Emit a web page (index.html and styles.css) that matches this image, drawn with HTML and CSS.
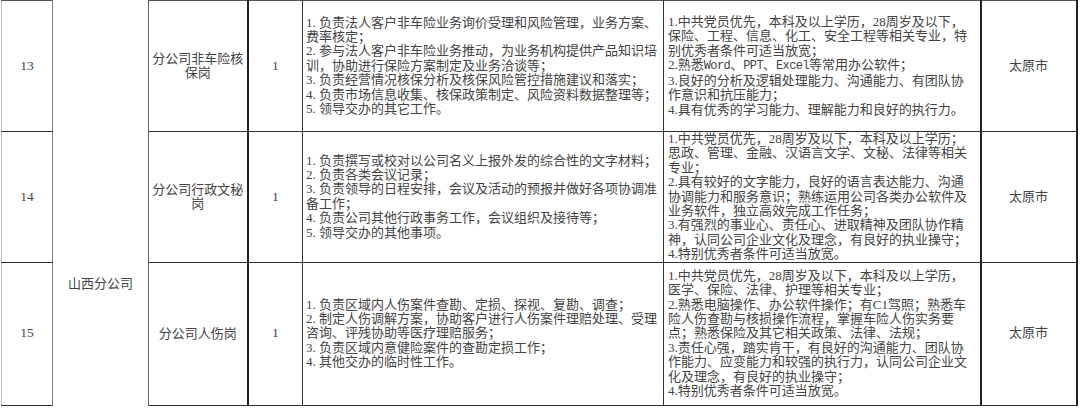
FILE: index.html
```html
<!DOCTYPE html>
<html lang="zh-CN">
<head>
<meta charset="utf-8">
<title>山西分公司岗位</title>
<link rel="stylesheet" href="styles.css">
</head>
<body>
<table class="jobs">
  <colgroup>
    <col class="c-no">
    <col class="c-org">
    <col class="c-post">
    <col class="c-num">
    <col class="c-duty">
    <col class="c-req">
    <col class="c-city">
  </colgroup>
  <tbody>
    <tr class="r1">
      <td class="no">13</td>
      <td class="org" rowspan="3"><div class="org-name">山西分公司</div></td>
      <td class="post">分公司非车险核<br>保岗</td>
      <td class="num">1</td>
      <td class="duty">1. 负责法人客户非车险业务询价受理和风险管理，业务方案、<br>费率核定；<br>2. 参与法人客户非车险业务推动，为业务机构提供产品知识培<br>训，协助进行保险方案制定及业务洽谈等；<br>3. 负责经营情况核保分析及核保风险管控措施建议和落实；<br>4. 负责市场信息收集、核保政策制定、风险资料数据整理等；<br>5. 领导交办的其它工作。</td>
      <td class="req">1.中共党员优先，本科及以上学历，28周岁及以下，<br>保险、工程、信息、化工、安全工程等相关专业，特<br>别优秀者条件可适当放宽；<br>2.熟悉<span class="mono">Word</span>、<span class="mono">PPT</span>、<span class="mono">Excel</span>等常用办公软件；<br>3.良好的分析及逻辑处理能力、沟通能力、有团队协<br>作意识和抗压能力；<br>4.具有优秀的学习能力、理解能力和良好的执行力。</td>
      <td class="city">太原市</td>
    </tr>
    <tr class="r2">
      <td class="no">14</td>
      <td class="post">分公司行政文秘<br>岗</td>
      <td class="num">1</td>
      <td class="duty">1. 负责撰写或校对以公司名义上报外发的综合性的文字材料；<br>2. 负责各类会议记录；<br>3. 负责领导的日程安排，会议及活动的预报并做好各项协调准<br>备工作；<br>4. 负责公司其他行政事务工作，会议组织及接待等；<br>5. 领导交办的其他事项。</td>
      <td class="req">1.中共党员优先，28周岁及以下，本科及以上学历；<br>思政、管理、金融、汉语言文学、文秘、法律等相关<br>专业；<br>2.具有较好的文字能力，良好的语言表达能力、沟通<br>协调能力和服务意识；熟练运用公司各类办公软件及<br>业务软件，独立高效完成工作任务；<br>3.有强烈的事业心、责任心、进取精神及团队协作精<br>神，认同公司企业文化及理念，有良好的执业操守；<br>4.特别优秀者条件可适当放宽。</td>
      <td class="city">太原市</td>
    </tr>
    <tr class="r3">
      <td class="no">15</td>
      <td class="post">分公司人伤岗</td>
      <td class="num">1</td>
      <td class="duty">1. 负责区域内人伤案件查勘、定损、探视、复勘、调查；<br>2. 制定人伤调解方案，协助客户进行人伤案件理赔处理、受理<br>咨询、评残协助等医疗理赔服务；<br>3. 负责区域内意健险案件的查勘定损工作；<br>4. 其他交办的临时性工作。</td>
      <td class="req">1.中共党员优先，28周岁及以下，本科及以上学历，<br>医学、保险、法律、护理等相关专业；<br>2.熟悉电脑操作、办公软件操作；有C1驾照；熟悉车<br>险人伤查勘与核损操作流程，掌握车险人伤实务要<br>点；熟悉保险及其它相关政策、法律、法规；<br>3.责任心强，踏实肯干，有良好的沟通能力、团队协<br>作能力、应变能力和较强的执行力，认同公司企业文<br>化及理念，有良好的执业操守；<br>4.特别优秀者条件可适当放宽。</td>
      <td class="city">太原市</td>
    </tr>
  </tbody>
</table>
</body>
</html>
```

FILE: styles.css
```css
html, body {
  margin: 0;
  padding: 0;
  background: #ffffff;
}

body {
  padding-left: 1px;
}

.jobs {
  border-collapse: collapse;
  table-layout: fixed;
  width: 1075px;
  font-family: "Liberation Serif", "Noto Sans CJK SC", serif;
  font-size: 13px;
  line-height: 14.4px;
  color: #444444;
}

.c-no { width: 51px; }
.c-org { width: 96px; }
.c-post { width: 99px; }
.c-num { width: 55px; }
.c-duty { width: 361px; }
.c-req { width: 317px; }
.c-city { width: 96px; }

.jobs td {
  padding: 0 3px;
  vertical-align: middle;
  border-top: 1.5px solid #555555;
  border-bottom: 1.5px solid #2e2e2e;
  border-right: 1.5px solid #333333;
  white-space: nowrap;
  overflow: visible;
}

.r1 { height: 131px; }
.r2 { height: 130px; }
.r3 { height: 143px; }

.jobs td.no {
  text-align: center;
  font-size: 13.5px;
  border-left: 1px solid #bdbdbd;
  border-right: 1px solid #808080;
}

.jobs td.org {
  text-align: center;
  vertical-align: top;
  border-top: none;
  border-bottom: none;
  border-right: 1.5px solid #666666;
  padding: 0;
}

.org-name {
  padding-top: 276px;
  line-height: 14px;
}

.jobs td.post {
  text-align: center;
  line-height: 14px;
  padding: 0;
}

.jobs td.num {
  text-align: center;
  font-size: 13.5px;
  border-left: 2px solid #222222;
}

.jobs td.duty {
  padding-left: 3px;
}

.jobs td.req {
  padding-left: 4px;
}

.jobs td.city {
  text-align: center;
  border-left: 2px solid #222222;
  border-right: 2px solid #222222;
}

.mono {
  font-family: "Liberation Mono", "Noto Sans CJK SC", monospace;
  font-size: 12px;
  letter-spacing: -0.6px;
}
```
